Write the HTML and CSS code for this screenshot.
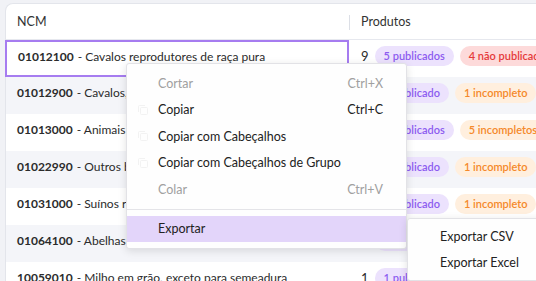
FILE: index.html
```html
<!DOCTYPE html>
<html lang="pt-BR">
<head>
  <meta charset="UTF-8" />
  <title>NCM – Produtos</title>
  <link rel="stylesheet" href="styles.css">
</head>
<body>

  <div class="grid">
    <div class="grid-header">
      <div class="cell col-ncm">NCM</div>
      <div class="cell col-prod">Produtos</div>
    </div>

    <div class="grid-row selected">
      <div class="cell col-ncm"><b>01012100</b> - Cavalos reprodutores de raça pura</div>
      <div class="cell col-prod">
        <span class="count">9</span>
        <span class="pill purple">5 publicados</span>
        <span class="pill red">4 não publicados</span>
      </div>
    </div>

    <div class="grid-row alt">
      <div class="cell col-ncm"><b>01012900</b> - Cavalos, exceto reprodutores de raça pura</div>
      <div class="cell col-prod">
        <span class="count">3</span>
        <span class="pill purple">1 publicado</span>
        <span class="pill orange">1 incompleto</span>
        <span class="pill pink">1 não publicado</span>
      </div>
    </div>

    <div class="grid-row">
      <div class="cell col-ncm"><b>01013000</b> - Animais e espécies asinina e muar</div>
      <div class="cell col-prod">
        <span class="count">8</span>
        <span class="pill purple">3 publicados</span>
        <span class="pill orange">5 incompletos</span>
      </div>
    </div>

    <div class="grid-row alt">
      <div class="cell col-ncm"><b>01022990</b> - Outros bovinos reprodutores</div>
      <div class="cell col-prod">
        <span class="count">3</span>
        <span class="pill purple">1 publicado</span>
        <span class="pill orange">1 incompleto</span>
        <span class="pill pink">1 não publicado</span>
      </div>
    </div>

    <div class="grid-row">
      <div class="cell col-ncm"><b>01031000</b> - Suínos reprodutores de raça pura</div>
      <div class="cell col-prod">
        <span class="count">3</span>
        <span class="pill purple">1 publicado</span>
        <span class="pill orange">1 incompleto</span>
        <span class="pill pink">1 não publicado</span>
      </div>
    </div>

    <div class="grid-row alt">
      <div class="cell col-ncm"><b>01064100</b> - Abelhas</div>
      <div class="cell col-prod">
        <span class="count">2</span>
        <span class="pill purple">1 publicado</span>
        <span class="pill orange">1 incompleto</span>
      </div>
    </div>

    <div class="grid-row">
      <div class="cell col-ncm"><b>10059010</b> - Milho em grão, exceto para semeadura</div>
      <div class="cell col-prod">
        <span class="count">1</span>
        <span class="pill purple">1 publicado</span>
      </div>
    </div>
  </div>

  <!-- context menu over the grid -->
  <div class="menu">
    <div class="menu-item disabled"><span class="icon"></span><span class="label">Cortar</span><span class="key">Ctrl+X</span></div>
    <div class="menu-item"><span class="icon"><svg width="12" height="12" viewBox="0 0 12 12"><rect x="3.5" y="3.5" width="7" height="7" rx="1" fill="none" stroke="#f2f2f2"/><path d="M1.5 8V2.5a1 1 0 0 1 1-1H8" fill="none" stroke="#f2f2f2"/></svg></span><span class="label">Copiar</span><span class="key">Ctrl+C</span></div>
    <div class="menu-item"><span class="icon"><svg width="12" height="12" viewBox="0 0 12 12"><rect x="3.5" y="3.5" width="7" height="7" rx="1" fill="none" stroke="#f2f2f2"/><path d="M1.5 8V2.5a1 1 0 0 1 1-1H8" fill="none" stroke="#f2f2f2"/></svg></span><span class="label">Copiar com Cabeçalhos</span></div>
    <div class="menu-item"><span class="icon"><svg width="12" height="12" viewBox="0 0 12 12"><rect x="3.5" y="3.5" width="7" height="7" rx="1" fill="none" stroke="#f2f2f2"/><path d="M1.5 8V2.5a1 1 0 0 1 1-1H8" fill="none" stroke="#f2f2f2"/></svg></span><span class="label">Copiar com Cabeçalhos de Grupo</span></div>
    <div class="menu-item disabled"><span class="icon"></span><span class="label">Colar</span><span class="key">Ctrl+V</span></div>
    <div class="menu-sep"></div>
    <div class="menu-item active"><span class="icon"></span><span class="label">Exportar</span></div>
  </div>

  <div class="menu submenu">
    <div class="menu-item"><span class="icon"></span><span class="label">Exportar CSV</span></div>
    <div class="menu-item"><span class="icon"></span><span class="label">Exportar Excel</span></div>
  </div>

</body>
</html>
```

FILE: styles.css
```css
body {
  margin: 0;
  background-color: #f1f2f6;
  font-family: 'Lato', sans-serif;
  font-size: 12px;
  color: #2b2b2b;
  overflow: hidden;
  height: 281px;
}

.grid {
  margin: 3px 0 0 5px;
  width: 620px;
  background-color: #ffffff;
  border: 1px solid #e3e5eb;
  border-right: none;
  border-radius: 8px 0 0 0;
}

.grid-header,
.grid-row {
  display: flex;
  height: 37px;
  box-sizing: border-box;
}

.grid-header {
  border-bottom: 1px solid #e6e8ee;
  height: 36px;
  font-size: 12.5px;
  color: #333333;
}

.grid-row .cell {
  padding-bottom: 6px;
}

.grid-row.alt {
  background-color: #f4f5f9;
}

.grid-row.selected .col-ncm {
  border: 2px solid #a67cf0;
  margin-left: -1px;
  width: 344px;
  padding-left: 11px;
  padding-bottom: 4px;
}

.cell {
  display: flex;
  align-items: center;
  white-space: nowrap;
  overflow: hidden;
  box-sizing: border-box;
}

.col-ncm {
  width: 343px;
  padding-left: 11px;
}

.col-prod {
  flex: 1;
  padding-left: 12px;
  gap: 6px;
}

.grid-row .col-prod {
  font-size: 13px;
}

.grid-header .col-prod {
  position: relative;
}

.grid-header .col-prod::before {
  content: "";
  position: absolute;
  left: 0;
  top: 11px;
  height: 15px;
  border-left: 1px solid #dcdfe6;
}

.col-ncm b {
  font-weight: 700;
  margin-right: 4px;
}

.pill {
  display: inline-flex;
  align-items: center;
  height: 20px;
  padding: 0 9px;
  border-radius: 10px;
  font-size: 11px;
  font-weight: 600;
}

.pill.purple { background-color: #ece2fd; color: #8d5cf0; }
.pill.red    { background-color: #fddada; color: #e53a3a; }
.pill.orange { background-color: #ffefde; color: #f5892a; }
.pill.pink   { background-color: #fbd8f4; color: #d84ad0; }

.menu {
  position: absolute;
  left: 126px;
  top: 63px;
  width: 281px;
  padding: 6px 0;
  background-color: #fefefe;
  border: 1px solid #e2e2e6;
  border-radius: 3px;
  box-shadow: 0 2px 8px rgba(0,0,0,0.12);
  box-sizing: border-box;
  font-size: 12.5px;
}

.menu-item {
  display: flex;
  align-items: center;
  height: 26.5px;
  padding-right: 23px;
  color: #222222;
}

.menu-item .icon {
  width: 31px;
  display: flex;
  justify-content: center;
}

.menu-item .label {
  flex: 1;
}

.menu-item.disabled {
  color: #a0a0a0;
}

.menu-item.active {
  background-color: #e3d5fa;
}

.menu-sep {
  border-top: 1px solid #e4e4e8;
  margin: 6px 0;
}

.submenu {
  left: 407px;
  top: 218px;
  width: 180px;
  padding: 4px 0;
}

.submenu .menu-item .icon {
  width: 32px;
}
```
